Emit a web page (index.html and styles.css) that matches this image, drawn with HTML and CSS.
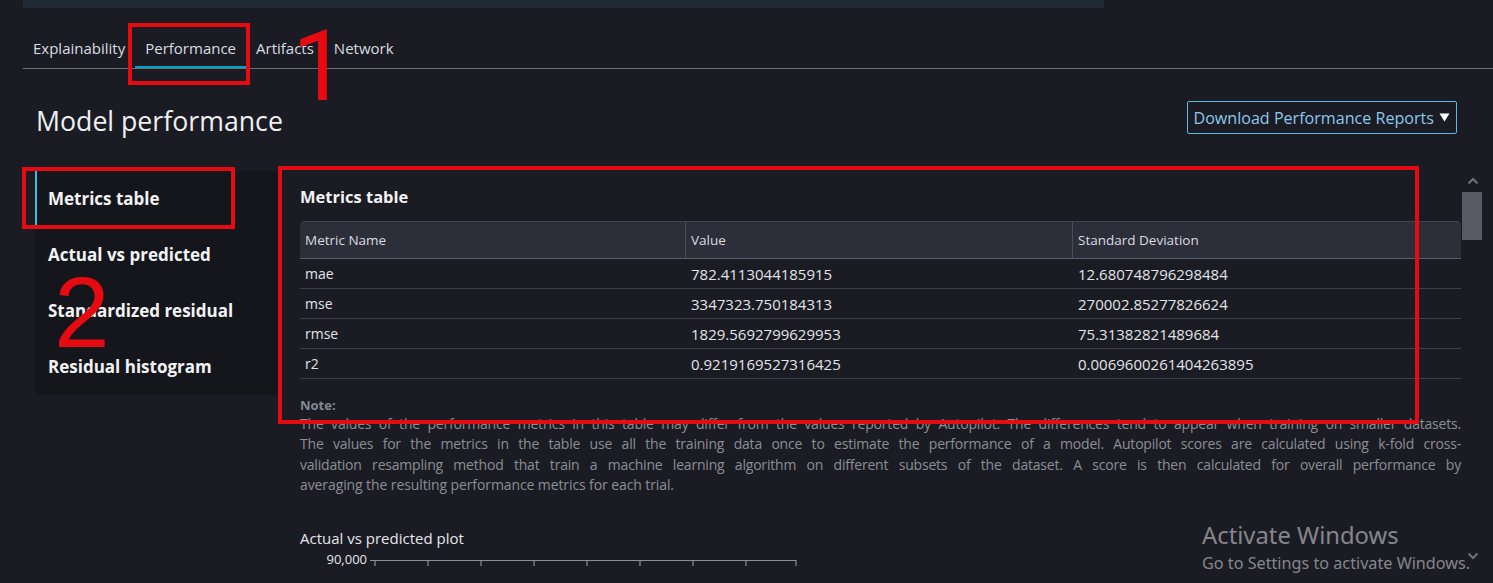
FILE: index.html
```html
<!DOCTYPE html>
<html>
<head>
<meta charset="utf-8">
<link rel="stylesheet" href="styles.css">
</head>
<body>
<div class="topbar"></div>
<nav class="tabs">
  <div class="tab">Explainability</div>
  <div class="tab active">Performance</div>
  <div class="tab">Artifacts</div>
  <div class="tab">Network</div>
</nav>
<header class="head">
  <h1 class="title">Model performance</h1>
  <button class="dl">Download Performance Reports <svg class="caret" width="11" height="9" viewBox="0 0 11 9"><path d="M0.5 0.5 H10.5 L5.5 8.5 Z" fill="#ffffff"/></svg></button>
</header>
<div class="main">
  <aside class="side">
    <div class="side-item active">Metrics table</div>
    <div class="side-item">Actual vs predicted</div>
    <div class="side-item">Standardized residual</div>
    <div class="side-item">Residual histogram</div>
  </aside>
  <section class="content">
    <h2 class="sec-title">Metrics table</h2>
    <table class="metrics">
      <colgroup><col class="c1"><col class="c2"><col class="c3"></colgroup>
      <thead>
        <tr><th>Metric Name</th><th>Value</th><th>Standard Deviation</th></tr>
      </thead>
      <tbody>
        <tr><td>mae</td><td class="num">782.4113044185915</td><td class="num">12.680748796298484</td></tr>
        <tr><td>mse</td><td class="num">3347323.750184313</td><td class="num">270002.85277826624</td></tr>
        <tr><td>rmse</td><td class="num">1829.5692799629953</td><td class="num">75.31382821489684</td></tr>
        <tr><td>r2</td><td class="num">0.9219169527316425</td><td class="num">0.0069600261404263895</td></tr>
      </tbody>
    </table>
    <div class="note-label">Note:</div>
    <p class="note">
      <span class="ln">The values of the performance metrics in this table may differ from the values reported by Autopilot. The differences tend to appear when training on smaller datasets.</span>
      <span class="ln">The values for the metrics in the table use all the training data once to estimate the performance of a model. Autopilot scores are calculated using k-fold cross-</span>
      <span class="ln">validation resampling method that train a machine learning algorithm on different subsets of the dataset. A score is then calculated for overall performance by</span>
      <span class="ln last">averaging the resulting performance metrics for each trial.</span>
    </p>
    <div class="plot-title">Actual vs predicted plot</div>
    <svg class="axis" width="520" height="30" viewBox="0 0 520 30">
      <text x="67" y="16" text-anchor="end" class="axis-label">90,000</text>
      <g stroke="#8e9097" stroke-width="1.2" fill="none">
        <line x1="70" y1="12.5" x2="496" y2="12.5"/>
        <line x1="75" y1="12" x2="75" y2="18"/>
        <line x1="128" y1="12" x2="128" y2="18"/>
        <line x1="181" y1="12" x2="181" y2="18"/>
        <line x1="234" y1="12" x2="234" y2="18"/>
        <line x1="287" y1="12" x2="287" y2="18"/>
        <line x1="340" y1="12" x2="340" y2="18"/>
        <line x1="393" y1="12" x2="393" y2="18"/>
        <line x1="446" y1="12" x2="446" y2="18"/>
        <line x1="496" y1="12" x2="496" y2="18"/>
      </g>
    </svg>
  </section>
</div>

<div class="scrollbar">
  <svg class="chev up" width="12" height="8" viewBox="0 0 12 8"><path d="M1.5 6.5 L6 2 L10.5 6.5" stroke="#6f707b" stroke-width="2" fill="none"/></svg>
  <div class="thumb"></div>
  <svg class="chev down" width="12" height="8" viewBox="0 0 12 8"><path d="M1.5 1.5 L6 6 L10.5 1.5" stroke="#6f707b" stroke-width="2" fill="none"/></svg>
</div>

<div class="watermark">
  <div class="wm1">Activate Windows</div>
  <div class="wm2">Go to Settings to activate Windows.</div>
</div>

<div class="anno box1"></div>
<div class="anno box2"></div>
<div class="anno box3"></div>
<div class="anno-num n1">1</div>
<div class="anno-num n2">2</div>
</body>
</html>
```

FILE: styles.css
```css
* { box-sizing: border-box; }
html, body {
  margin: 0;
  padding: 0;
}
body {
  background: #1b1c23;
  font-family: "Open Sans", "Noto Sans", sans-serif;
  color: #d5d8dd;
  width: 1493px;
  height: 583px;
  overflow: hidden;
  position: relative;
}

.topbar {
  margin-left: 23px;
  width: 1081px;
  height: 8px;
  background: #212a37;
}

.tabs {
  margin-left: 23px;
  display: flex;
  height: 61px;
  border-bottom: 1px solid #6c6e75;
}
.tab {
  padding: 30px 10px 8px;
  font-size: 15px;
  line-height: 20px;
  color: #d9dce0;
  height: 60px;
  border-bottom: 2px solid transparent;
}
.tab.active {
  border-bottom-color: #00a1c9;
}

.head {
  display: flex;
  justify-content: space-between;
  align-items: center;
  padding: 0 36px 0 36px;
  margin-top: 32px;
  height: 33px;
}
.title {
  margin: 0;
  font-size: 26.7px;
  font-weight: 400;
  color: #eef0f2;
  line-height: 33px;
  position: relative;
  top: 3px;
}
.dl {
  height: 33px;
  background: transparent;
  border: 1px solid #5cb8e4;
  border-radius: 2px;
  color: #8cc8ee;
  font-family: "Open Sans", "Noto Sans", sans-serif;
  font-size: 16.1px;
  padding: 0 6px 0 5px;
  display: flex;
  align-items: center;
  gap: 5px;
}
.caret {
  display: block;
  flex: none;
}

.main {
  display: flex;
  margin-top: 37px;
}
.side {
  margin-left: 35px;
  width: 243px;
  height: 224px;
  background: #15161c;
  flex: none;
}
.side-item {
  height: 56px;
  display: flex;
  align-items: center;
  padding-left: 11px;
  font-size: 17px;
  font-weight: 700;
  color: #f2f3f5;
  border-left: 2px solid transparent;
}
.side-item.active {
  border-left-color: #44b8e0;
  height: 55px;
}

.content {
  margin-left: 22px;
  width: 1161px;
  flex: none;
}
.sec-title {
  margin: 14px 0 12px;
  font-size: 16.5px;
  line-height: 24px;
  font-weight: 700;
  color: #f2f3f5;
}

.metrics {
  width: 1161px;
  border-collapse: separate;
  border-spacing: 0;
  table-layout: fixed;
}
.c1 { width: 386px; }
.c2 { width: 387px; }
.c3 { width: 388px; }
.metrics th {
  background: #2c2e39;
  text-align: left;
  font-weight: 400;
  font-size: 13.5px;
  color: #d9dbe0;
  height: 38px;
  padding: 0 5px;
  border-top: 1px solid #42444e;
  border-bottom: 1px solid #5d5f68;
  border-right: 1px solid #4a4c56;
}
.metrics th:first-child { border-top-left-radius: 5px; }
.metrics th:last-child { border-top-right-radius: 5px; border-right: none; }
.metrics td {
  font-size: 14px;
  height: 30px;
  padding: 0 5px;
  color: #e2e4e8;
  border-bottom: 1px solid #3d3f48;
}
.metrics td.num {
  font-size: 15px;
}

.note-label {
  margin-top: 17px;
  font-size: 13px;
  line-height: 18px;
  font-weight: 700;
  color: #858890;
}
.note {
  margin: 0;
  font-size: 14px;
  line-height: 20.3px;
  color: #8b8e96;
}
.ln {
  display: block;
  text-align: justify;
  text-align-last: justify;
  white-space: nowrap;
  letter-spacing: -0.2px;
}
.ln.last {
  text-align: left;
  text-align-last: left;
  letter-spacing: -0.1px;
}

.plot-title {
  margin-top: 33px;
  font-size: 15px;
  line-height: 20px;
  color: #e4e6ea;
}
.axis {
  display: block;
}
.axis-label {
  font-family: "Open Sans", "Noto Sans", sans-serif;
  font-size: 13px;
  fill: #e4e6ea;
}

.scrollbar {
  position: absolute;
  left: 1462px;
  top: 171px;
  width: 20px;
  height: 396px;
}
.chev {
  position: absolute;
  left: 5px;
}
.chev.up { top: 6px; }
.chev.down { top: 381px; }
.thumb {
  position: absolute;
  top: 21px;
  left: 0;
  width: 20px;
  height: 48px;
  background: #595a66;
}

.watermark {
  position: absolute;
  left: 1202px;
  top: 519px;
  color: #85868c;
  font-family: "Noto Sans", "Open Sans", sans-serif;
}
.wm1 {
  font-size: 23.8px;
  line-height: 32px;
}
.wm2 {
  font-size: 16.2px;
  line-height: 24px;
}

.anno {
  position: absolute;
  border: 4px solid #e60b10;
}
.box1 { left: 128px; top: 23px; width: 122px; height: 62px; }
.box2 { left: 22px; top: 167px; width: 213px; height: 62px; }
.box3 { left: 278px; top: 166px; width: 1141px; height: 258px; }
.anno-num {
  position: absolute;
  color: #e60b10;
  line-height: 1;
}
.n1 {
  font-family: Roboto, sans-serif;
  font-size: 98px;
  left: 292px;
  top: 18px;
}
.n2 {
  font-family: "Liberation Sans", sans-serif;
  font-size: 100px;
  left: 54px;
  top: 262px;
}
```
